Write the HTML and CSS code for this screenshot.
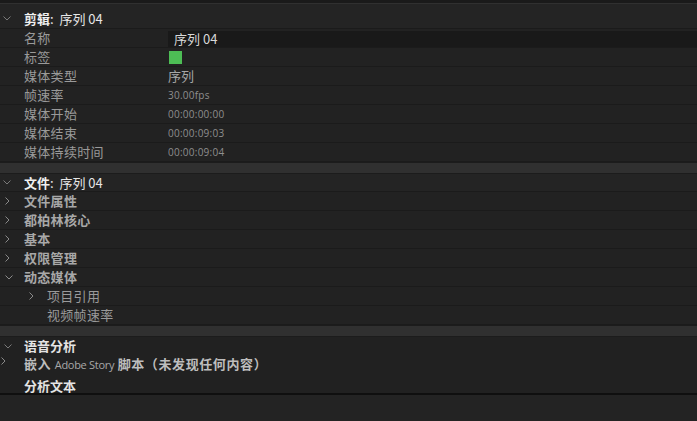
FILE: index.html
```html
<!DOCTYPE html>
<html lang="zh">
<head>
<meta charset="utf-8">
<link rel="stylesheet" href="styles.css">
</head>
<body>
<div class="panel">
  <div class="topbar"></div>

  <div class="sec-head first">
    <span class="chev"><svg width="8" height="5" viewBox="0 0 8 5"><polyline points="0.5,0.5 4,4 7.5,0.5" fill="none" stroke="#7a7a7a" stroke-width="1"/></svg></span>
    <span class="head-title"><b>剪辑</b>:&nbsp;&nbsp;序列 04</span>
  </div>
  <div class="row"><span class="chev"></span><span class="label">名称</span><span class="input">序列 04</span></div>
  <div class="row"><span class="chev"></span><span class="label">标签</span><span class="swatch"></span></div>
  <div class="row"><span class="chev"></span><span class="label">媒体类型</span><span class="value">序列</span></div>
  <div class="row"><span class="chev"></span><span class="label">帧速率</span><span class="value small">30.00fps</span></div>
  <div class="row"><span class="chev"></span><span class="label">媒体开始</span><span class="value small">00:00:00:00</span></div>
  <div class="row"><span class="chev"></span><span class="label">媒体结束</span><span class="value small">00:00:09:03</span></div>
  <div class="row"><span class="chev"></span><span class="label">媒体持续时间</span><span class="value small">00:00:09:04</span></div>

  <div class="divider"></div>

  <div class="sec-head second">
    <span class="chev"><svg width="8" height="5" viewBox="0 0 8 5"><polyline points="0.5,0.5 4,4 7.5,0.5" fill="none" stroke="#7a7a7a" stroke-width="1"/></svg></span>
    <span class="head-title"><b>文件</b>:&nbsp;&nbsp;序列 04</span>
  </div>
  <div class="row"><span class="chev"><svg width="5" height="8" viewBox="0 0 5 8"><polyline points="0.5,0.5 4,4 0.5,7.5" fill="none" stroke="#8a8a8a" stroke-width="1"/></svg></span><span class="label bold">文件属性</span></div>
  <div class="row"><span class="chev"><svg width="5" height="8" viewBox="0 0 5 8"><polyline points="0.5,0.5 4,4 0.5,7.5" fill="none" stroke="#8a8a8a" stroke-width="1"/></svg></span><span class="label bold">都柏林核心</span></div>
  <div class="row"><span class="chev"><svg width="5" height="8" viewBox="0 0 5 8"><polyline points="0.5,0.5 4,4 0.5,7.5" fill="none" stroke="#8a8a8a" stroke-width="1"/></svg></span><span class="label bold">基本</span></div>
  <div class="row"><span class="chev"><svg width="5" height="8" viewBox="0 0 5 8"><polyline points="0.5,0.5 4,4 0.5,7.5" fill="none" stroke="#8a8a8a" stroke-width="1"/></svg></span><span class="label bold">权限管理</span></div>
  <div class="row"><span class="chev"><svg width="8" height="5" viewBox="0 0 8 5"><polyline points="0.5,0.5 4,4 7.5,0.5" fill="none" stroke="#8a8a8a" stroke-width="1"/></svg></span><span class="label bold">动态媒体</span></div>
  <div class="row"><span class="chev indent"><svg width="5" height="8" viewBox="0 0 5 8"><polyline points="0.5,0.5 4,4 0.5,7.5" fill="none" stroke="#8a8a8a" stroke-width="1"/></svg></span><span class="label">项目引用</span></div>
  <div class="row"><span class="chev indent"></span><span class="label">视频帧速率</span></div>

  <div class="divider"></div>

  <div class="speech">
    <div class="srow s1">
      <span class="chev"><svg width="8" height="5" viewBox="0 0 8 5"><polyline points="0.5,0.5 4,4 7.5,0.5" fill="none" stroke="#7a7a7a" stroke-width="1"/></svg></span>
      <span class="stitle">语音分析</span>
    </div>
    <div class="srow">
      <span class="chev up"><svg width="5" height="8" viewBox="0 0 5 8"><polyline points="0.5,0.5 4,4 0.5,7.5" fill="none" stroke="#8a8a8a" stroke-width="1"/></svg></span>
      <span class="sembed">嵌入 <span class="latin">Adobe Story</span> 脚本（未发现任何内容）</span>
    </div>
    <div class="srow last">
      <span class="chev"></span>
      <span class="stitle">分析文本</span>
    </div>
  </div>
  <div class="bottom"></div>
</div>
</body>
</html>
```

FILE: styles.css
```css
html, body {
  margin: 0;
  padding: 0;
  background: #232323;
}
body {
  font-family: "Noto Sans CJK SC", "Noto Sans", sans-serif;
  font-size: 13px;
  color: #9c9c9c;
  width: 697px;
  height: 421px;
  overflow: hidden;
}
.panel {
  display: flex;
  flex-direction: column;
}
.topbar {
  height: 3px;
  background: #1a1a1a;
  border-bottom: 1px solid #303030;
}
.sec-head {
  display: flex;
  align-items: center;
  height: 18px;
  border-bottom: 1px solid #1b1b1b;
  background: #242424;
  color: #e2e2e2;
}
.sec-head.first {
  height: 19px;
  padding-top: 5px;
}
.sec-head.second {
  height: 17px;
}
.head-title {
  font-size: 13px;
  line-height: 18px;
  color: #e6e6e6;
}
.head-title b {
  font-weight: 700;
  color: #f0f0f0;
}
.chev {
  width: 24px;
  flex: none;
  display: flex;
  align-items: center;
  padding-left: 3px;
  box-sizing: border-box;
}
.row .chev {
  padding-left: 5px;
}
.row .chev.indent {
  width: 47px;
  padding-left: 29px;
}
.row {
  display: flex;
  align-items: center;
  height: 18px;
  border-bottom: 1px solid #1b1b1b;
  background: #222222;
}
.label {
  width: 144px;
  flex: none;
  line-height: 18px;
  color: #9a9a9a;
  letter-spacing: 0.3px;
}
.label.bold {
  font-weight: 700;
  color: #a8a8a8;
  width: auto;
}
.value {
  color: #a6a6a6;
  line-height: 18px;
}
.value.small {
  font-family: "Open Sans", "Noto Sans", sans-serif;
  font-size: 10px;
  color: #8f8f8f;
  letter-spacing: 0.25px;
}
.input {
  flex: 1;
  height: 16px;
  line-height: 16px;
  margin-top: 1px;
  background: #191919;
  color: #d8d8d8;
  padding-left: 6px;
  box-sizing: border-box;
}
.swatch {
  width: 13px;
  height: 13px;
  margin-left: 1px;
  background: #4dbd55;
}
.divider {
  height: 10px;
  background: #303030;
  border-top: 1px solid #1c1c1c;
  border-bottom: 1px solid #1c1c1c;
}
.speech {
  display: flex;
  flex-direction: column;
  background: #212121;
}
.srow {
  display: flex;
  align-items: center;
  height: 19px;
}
.srow.s1 {
  height: 18px;
}
.srow .chev {
  padding-left: 4px;
}
.srow .chev.up {
  align-self: flex-start;
  padding-top: 2px;
  padding-left: 1px;
}
.srow.last {
  height: 19px;
  align-items: flex-end;
}
.srow.last .stitle {
  margin-bottom: -2px;
}
.stitle {
  font-weight: 700;
  color: #e4e4e4;
  line-height: 18px;
}
.sembed {
  font-weight: 700;
  color: #bdbdbd;
  line-height: 18px;
  letter-spacing: 0.6px;
}
.latin {
  font-family: "Open Sans", "Noto Sans", sans-serif;
  font-weight: 400;
  font-size: 11px;
  color: #a8a8a8;
  letter-spacing: -0.3px;
}
.bottom {
  height: 26px;
  background: #232323;
  border-top: 2px solid #0f0f0f;
}
```
